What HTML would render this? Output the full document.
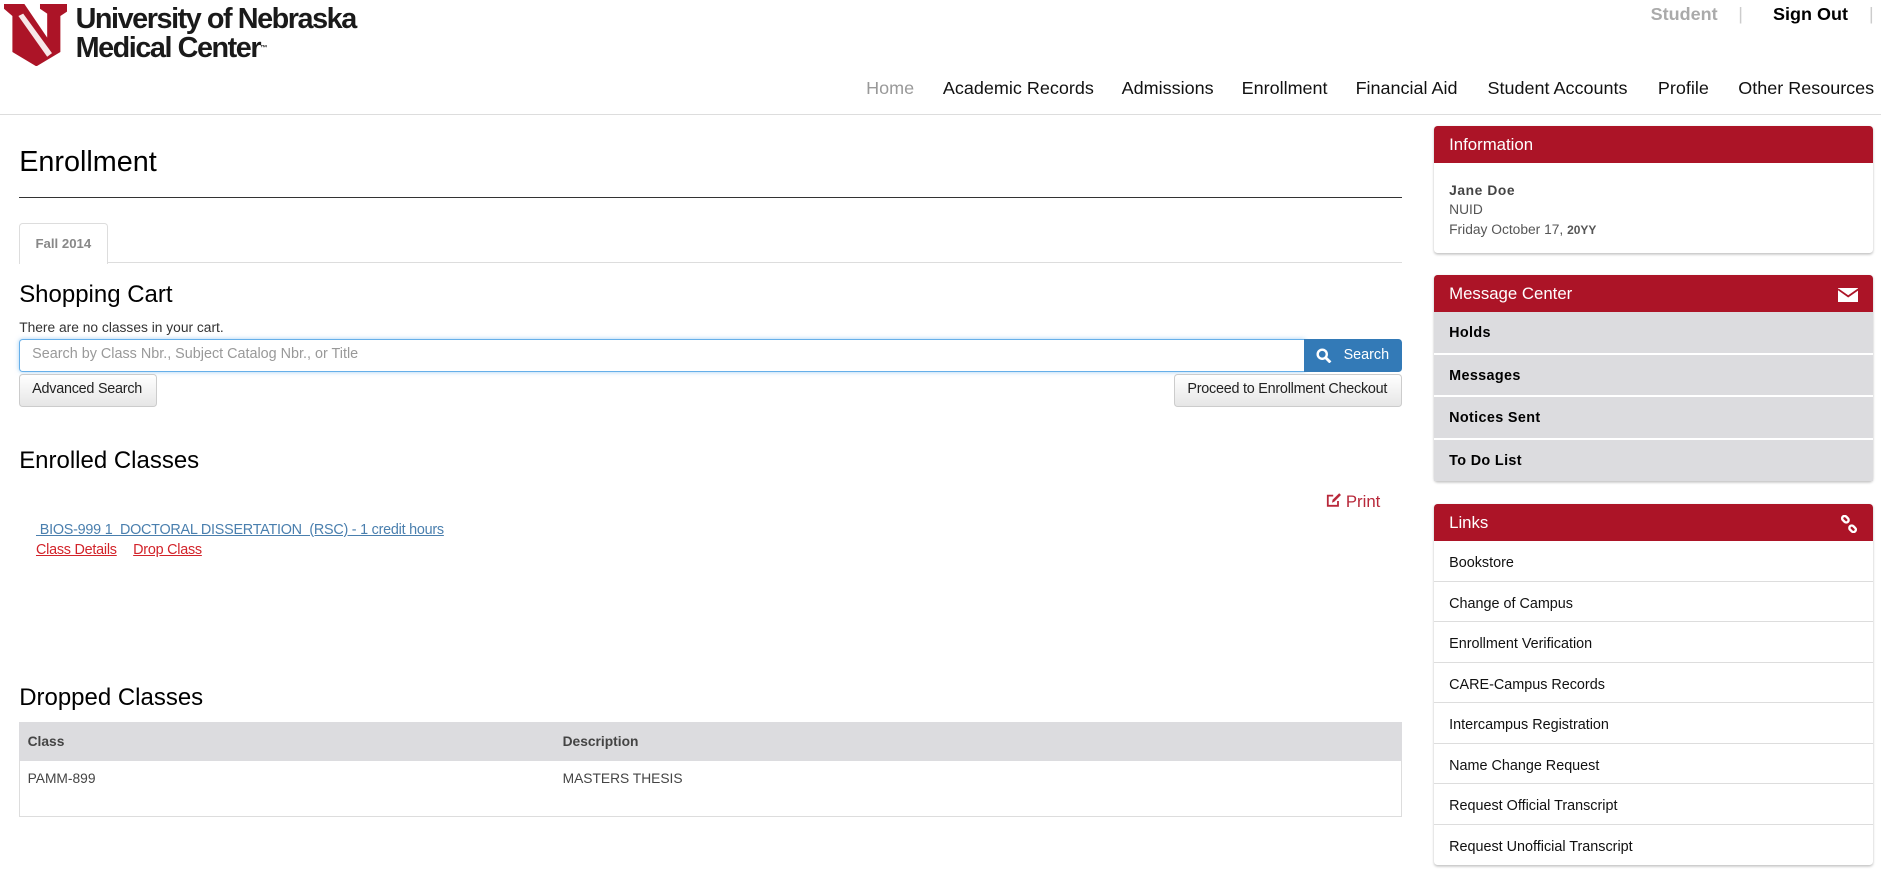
<!DOCTYPE html>
<html><head><meta charset="utf-8"><style>
html{zoom:1.19962}
body{margin:0;width:1568px;height:738px;position:relative;overflow:hidden;background:#fff;font-family:"Liberation Sans",Arial,sans-serif;color:#000}
.a{position:absolute;white-space:nowrap}
.nav{top:65px;font-size:15px;color:#111}
.panel{position:absolute;left:1195px;width:366px;border-radius:3px;box-shadow:0 1px 2px rgba(0,0,0,.25);background:#fff}
.ph{background:#ac1427;color:#fff;font-size:14px;height:31px;line-height:31px;padding-left:13px;border-radius:3px 3px 0 0;position:relative}
.mc{background:#dcdcdf;height:34px;line-height:36px;padding-left:13px;font-size:12px;font-weight:bold;border-top:2px solid #fff;letter-spacing:.3px}
.lk{height:33px;line-height:37px;padding-left:13px;font-size:12px;border-top:1px solid #ddd;color:#111}
.btn{position:absolute;border:1px solid #ccc;border-radius:3px;background:linear-gradient(#fff,#e6e6e6);font-size:12px;line-height:25px;padding:0 10px;box-sizing:border-box;height:27px;color:#222;white-space:nowrap;letter-spacing:-.2px}
</style></head><body>
<svg class="a" style="left:3px;top:3px" width="53" height="52" viewBox="0 0 53 52"><path d="M0 0H17L36 28V8L30 4V0H53V6L47 10V40L27 52L7 40V10L0 4Z" fill="#ac1427"/><path d="M12 10L36 44L40 41L16 8Z" fill="#fff" opacity=".9"/></svg>
<div class="a" style="left:63px;top:4px;font-size:24px;font-weight:bold;letter-spacing:-1.2px;line-height:24px;color:#1a1a1a">University of Nebraska<br>Medical Center<span style="font-size:6px;vertical-align:top">™</span></div>
<div class="a" style="left:1376px;top:3px;font-size:15px;font-weight:bold;color:#aaa">Student</div>
<div class="a" style="left:1449px;top:3px;font-size:15px;color:#ccc">|</div>
<div class="a" style="left:1478px;top:3px;font-size:15px;font-weight:bold">Sign Out</div>
<div class="a" style="left:1558px;top:3px;font-size:15px;color:#ccc">|</div>
<div class="a nav" style="left:722px;color:#999">Home</div>
<div class="a nav" style="left:786px">Academic Records</div>
<div class="a nav" style="left:935px">Admissions</div>
<div class="a nav" style="left:1035px">Enrollment</div>
<div class="a nav" style="left:1130px">Financial Aid</div>
<div class="a nav" style="left:1240px">Student Accounts</div>
<div class="a nav" style="left:1382px">Profile</div>
<div class="a nav" style="left:1449px">Other Resources</div>
<div class="a" style="left:0;top:95px;width:1568px;height:1px;background:#ddd"></div>

<div class="a" style="left:16px;top:122px;font-size:24px">Enrollment</div>
<div class="a" style="left:16px;top:164px;width:1153px;height:1px;background:#333"></div>
<div class="a" style="left:16px;top:186px;width:72px;height:33px;border:1px solid #ddd;border-bottom:none;border-radius:3px 3px 0 0;background:#fff;z-index:2;text-align:center;line-height:33px;font-size:11px;font-weight:bold;color:#888">Fall 2014</div>
<div class="a" style="left:16px;top:218px;width:1153px;height:1px;background:#ddd"></div>
<div class="a" style="left:16px;top:234px;font-size:20px">Shopping Cart</div>
<div class="a" style="left:16px;top:267px;font-size:11.5px;color:#333">There are no classes in your cart.</div>
<div class="a" style="left:16px;top:283px;width:1072px;height:27px;border:1px solid #66afe9;box-shadow:0 0 4px rgba(102,175,233,.6);border-radius:3px 0 0 3px;box-sizing:border-box;font-size:12px;line-height:25px;padding-left:10px;color:#999">Search by Class Nbr., Subject Catalog Nbr., or Title</div>
<div class="a" style="left:1087px;top:283px;width:82px;height:27px;background:#337ab7;border-radius:0 3px 3px 0;color:#fff;font-size:12px;line-height:27px"><svg style="position:absolute;left:10px;top:7px" width="13" height="13" viewBox="0 0 13 13"><circle cx="5.2" cy="5.2" r="3.8" fill="none" stroke="#fff" stroke-width="2"/><path d="M8 8L12 12" stroke="#fff" stroke-width="2.4"/></svg><span style="position:absolute;left:33px">Search</span></div>
<div class="btn" style="left:16px;top:312px;width:115px">Advanced Search</div>
<div class="btn" style="left:979px;top:312px;width:190px">Proceed to Enrollment Checkout</div>

<div class="a" style="left:16px;top:373px;font-size:20px">Enrolled Classes</div>
<div class="a" style="left:1105px;top:410px;font-size:14px;color:#b8283a"><svg width="13" height="13" viewBox="0 0 13 13" style="vertical-align:-1px"><path d="M10 7.5V11.5H1.5V3H6" fill="none" stroke="#b8283a" stroke-width="1.5"/><path d="M5 9L5.5 6.5L11 1L12.5 2.5L7 8Z" fill="#b8283a"/></svg> Print</div>
<div class="a" style="left:30px;top:435px;font-size:12px;color:#4a7fae;text-decoration:underline;white-space:pre;letter-spacing:-.2px"> BIOS-999 1  DOCTORAL DISSERTATION  (RSC) - 1 credit hours</div>
<div class="a" style="left:30px;top:452px;font-size:12px;color:#d2232a;text-decoration:underline;letter-spacing:-.2px">Class Details</div>
<div class="a" style="left:111px;top:452px;font-size:12px;color:#d2232a;text-decoration:underline;letter-spacing:-.2px">Drop Class</div>

<div class="a" style="left:16px;top:570px;font-size:20px">Dropped Classes</div>
<div class="a" style="left:16px;top:602px;width:1151px;height:78px;border:1px solid #ddd;border-top:none"></div>
<div class="a" style="left:16px;top:602px;width:1153px;height:32px;background:#dcdcdf"></div>
<div class="a" style="left:23px;top:612px;font-size:11.5px;font-weight:bold;color:#444">Class</div>
<div class="a" style="left:469px;top:612px;font-size:11.5px;font-weight:bold;color:#444">Description</div>
<div class="a" style="left:23px;top:643px;font-size:11.5px;color:#444">PAMM-899</div>
<div class="a" style="left:469px;top:643px;font-size:11.5px;color:#444">MASTERS THESIS</div>

<div class="panel" style="top:105px;height:106px"><div class="ph">Information</div>
<div style="padding:15px 13px;font-size:11.5px;color:#555;line-height:16px"><b style="color:#444;letter-spacing:.5px">Jane Doe</b><br>NUID<br>Friday October 17, <b style="font-size:10px">20YY</b></div></div>

<div class="panel" style="top:229px;background:#dcdcdf"><div class="ph">Message Center<svg style="position:absolute;right:12px;top:11px" width="17" height="12" viewBox="0 0 17 12"><rect width="17" height="12" fill="#fff"/><path d="M0 1L8.5 7L17 1" fill="none" stroke="#ac1427" stroke-width="1.5"/></svg></div>
<div class="mc" style="border-top:0">Holds</div><div class="mc">Messages</div><div class="mc">Notices Sent</div><div class="mc">To Do List</div></div>

<div class="panel" style="top:420px"><div class="ph">Links<svg style="position:absolute;right:12px;top:9px" width="15" height="15" viewBox="0 0 15 15"><g fill="none" stroke="#fff" stroke-width="2"><rect x="1.5" y="1.5" width="6" height="4" rx="2" transform="rotate(45 4.5 3.5)"/><rect x="7.5" y="9.5" width="6" height="4" rx="2" transform="rotate(45 10.5 11.5)"/></g></svg></div>
<div class="lk" style="border-top:0">Bookstore</div><div class="lk">Change of Campus</div><div class="lk">Enrollment Verification</div><div class="lk">CARE-Campus Records</div><div class="lk">Intercampus Registration</div><div class="lk">Name Change Request</div><div class="lk">Request Official Transcript</div><div class="lk">Request Unofficial Transcript</div></div>
</body></html>
